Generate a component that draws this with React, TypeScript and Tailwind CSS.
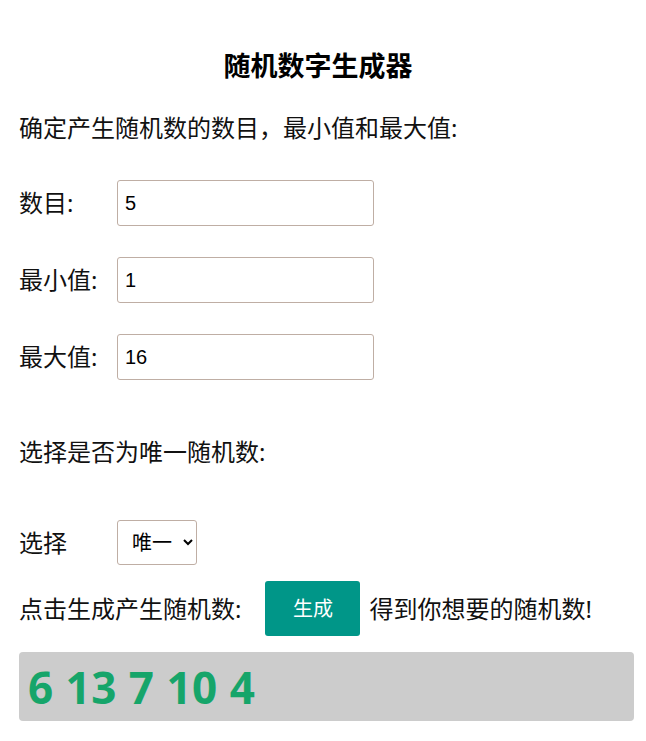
import React from "react";

const font = { fontFamily: '"Noto Sans", "Noto Sans CJK SC", sans-serif' };

export default function App() {
  return (
    <div
      className="w-[646px] min-h-[741px] bg-white text-[#111] pl-[19px] pr-[12px] pt-[48px]"
      style={font}
    >
      <h1 className="text-[27px] font-bold leading-[36px] text-center pr-[17px] text-black">
        随机数字生成器
      </h1>
      <p className="mt-[26px] text-[24px] leading-[36px]">确定产生随机数的数目，最小值和最大值:</p>

      <div className="mt-[34px] flex flex-col gap-[31px]">
        {[
          ["数目:", "5"],
          ["最小值:", "1"],
          ["最大值:", "16"],
        ].map(([label, val]) => (
          <div key={label} className="flex items-center h-[46px]">
            <span className="w-[98px] text-[24px] leading-[36px]">{label}</span>
            <input
              defaultValue={val}
              className="w-[257px] h-[46px] border border-[#bfaea4] rounded-[3px] px-[7px] text-[20px] text-black outline-none"
              style={{ fontFamily: '"Liberation Sans", Arial, sans-serif' }}
            />
          </div>
        ))}
      </div>

      <p className="mt-[54px] text-[24px] leading-[36px]">选择是否为唯一随机数:</p>

      <div className="mt-[50px] flex items-center h-[45px]">
        <span className="w-[98px] text-[24px] leading-[36px]">选择</span>
        <select
          defaultValue="唯一"
          className="w-[80px] h-[45px] border border-[#bfaea4] rounded-[3px] pl-[10px] text-[20px] text-black"
        >
          <option value="唯一">唯一</option>
          <option value="不唯一">不唯一</option>
        </select>
      </div>

      <div className="mt-[16px] flex items-center h-[55px]">
        <span className="text-[24px] leading-[36px]">点击生成产生随机数:</span>
        <button className="ml-[24px] w-[95px] h-[55px] bg-[#009688] text-white text-[20px] rounded-[3px]">
          生成
        </button>
        <span className="ml-[9px] text-[24px] leading-[36px]">得到你想要的随机数!</span>
      </div>

      <div className="mt-[16px] h-[69px] bg-[#cccccc] rounded-[4px] flex items-center px-[9px]">
        <span
          className="text-[44px] font-bold text-[#16a56a] leading-none tracking-[0.5px]"
          style={{ fontFamily: '"Open Sans", "Noto Sans", sans-serif' }}
        >
          6 13 7 10 4
        </span>
      </div>
    </div>
  );
}
